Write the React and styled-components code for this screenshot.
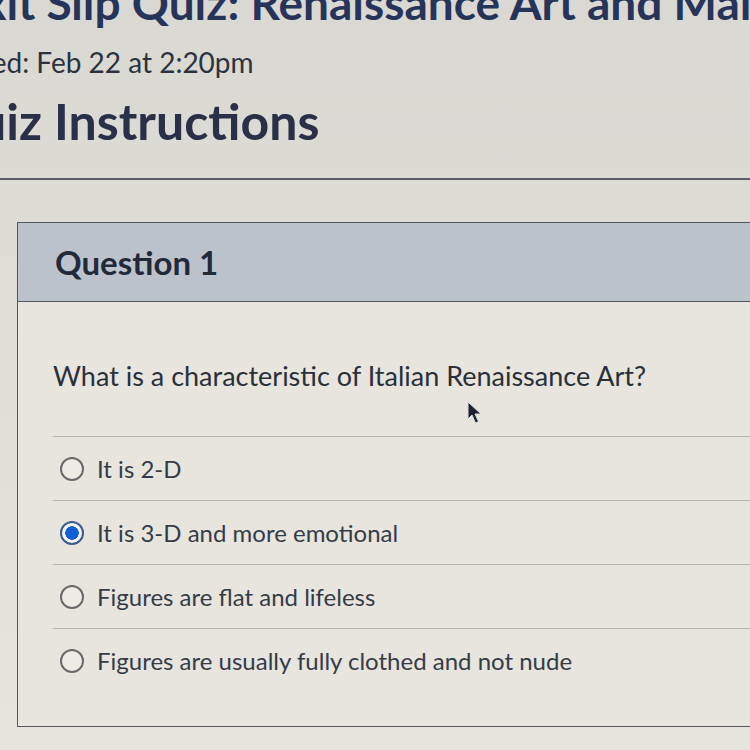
import React from "react";
import styled, { createGlobalStyle } from "styled-components";

const GlobalStyle = createGlobalStyle`
  html, body {
    margin: 0;
    padding: 0;
    background: #dedcd5;
  }
  body {
    font-family: Lato, "Open Sans", "Liberation Sans", sans-serif;
    color: #2d3540;
  }
`;

const Page = styled.div`
  width: 750px;
  height: 750px;
  overflow: hidden;
  background: linear-gradient(180deg, #d9d8d2 0%, #dfddd6 45%, #e6e4db 100%);
`;

// the page is scrolled sideways, so each header line starts off-screen
const Header = styled.header`
  white-space: nowrap;
`;

const Title = styled.h1`
  margin: -23px 0 0 -44px;
  font-size: 46px;
  line-height: 52px;
  font-weight: 700;
  color: #27345a;
`;

const Meta = styled.div`
  margin: 17px 0 0 -67px;
  font-size: 28px;
  line-height: 32px;
  color: #2b3340;
`;

const Heading = styled.h2`
  margin: 15px 0 0 -62px;
  font-size: 50px;
  line-height: 56px;
  font-weight: 700;
  color: #2a3048;
`;

const Rule = styled.hr`
  margin: 29px 0 0;
  border: 0;
  border-top: 2px solid #5c5e66;
`;

const QuestionBox = styled.section`
  margin: 42px 0 0 17px;
  border: 1px solid #55575e;
  border-right: 0;
  background: #e7e5dd;
`;

const QuestionHead = styled.div`
  height: 78px;
  display: flex;
  align-items: center;
  padding-left: 37px;
  background: #bcc2cc;
  border-bottom: 1px solid #55575e;
`;

const QuestionTitle = styled.h3`
  margin: 0;
  font-size: 33px;
  font-weight: 700;
  color: #222a3a;
`;

const QuestionBody = styled.div`
  position: relative;
  padding: 58px 0 34px 35px;
`;

const Prompt = styled.p`
  margin: 0;
  font-size: 27px;
  line-height: 32px;
  color: #2a303a;
`;

const Cursor = styled.svg`
  position: absolute;
  left: 449px;
  top: 99px;
`;

const Answers = styled.ul`
  list-style: none;
  margin: 44px 0 0;
  padding: 0;
`;

const Answer = styled.li`
  height: 63px;
  display: flex;
  align-items: center;
  gap: 13px;
  padding-left: 7px;
  border-top: 1px solid #b5b5b0;
  font-size: 24px;
  color: #353c48;
`;

const Radio = styled.span`
  box-sizing: border-box;
  width: 24px;
  height: 24px;
  border-radius: 50%;
  flex-shrink: 0;
  border: ${(p) => (p.checked ? "2px solid #3d5a8a" : "2px solid #6a6a6a")};
  background: ${(p) =>
    p.checked
      ? "radial-gradient(circle, #1160d8 0 6.5px, #f4f4f4 7px 100%)"
      : "#ecebe6"};
`;

const answers = [
  { text: "It is 2-D" },
  { text: "It is 3-D and more emotional", checked: true },
  { text: "Figures are flat and lifeless" },
  { text: "Figures are usually fully clothed and not nude" },
];

export default function App() {
  return (
    <Page>
      <GlobalStyle />
      <Header>
        <Title>Exit Slip Quiz: Renaissance Art and Main Ideas</Title>
        <Meta>Started: Feb 22 at 2:20pm</Meta>
        <Heading>Quiz Instructions</Heading>
      </Header>
      <Rule />
      <QuestionBox>
        <QuestionHead>
          <QuestionTitle>Question 1</QuestionTitle>
        </QuestionHead>
        <QuestionBody>
          <Prompt>What is a characteristic of Italian Renaissance Art?</Prompt>
          <Cursor width="17" height="24" viewBox="0 0 17 24">
            <path
              d="M1 1 L1 18 L5 14 L8.5 22 L11.5 20.6 L8 13 L14 13 Z"
              fill="#1e2230"
              stroke="#d8dce4"
              strokeWidth="1"
            />
          </Cursor>
          <Answers>
            {answers.map((a) => (
              <Answer key={a.text}>
                <Radio checked={a.checked} />
                {a.text}
              </Answer>
            ))}
          </Answers>
        </QuestionBody>
      </QuestionBox>
    </Page>
  );
}
